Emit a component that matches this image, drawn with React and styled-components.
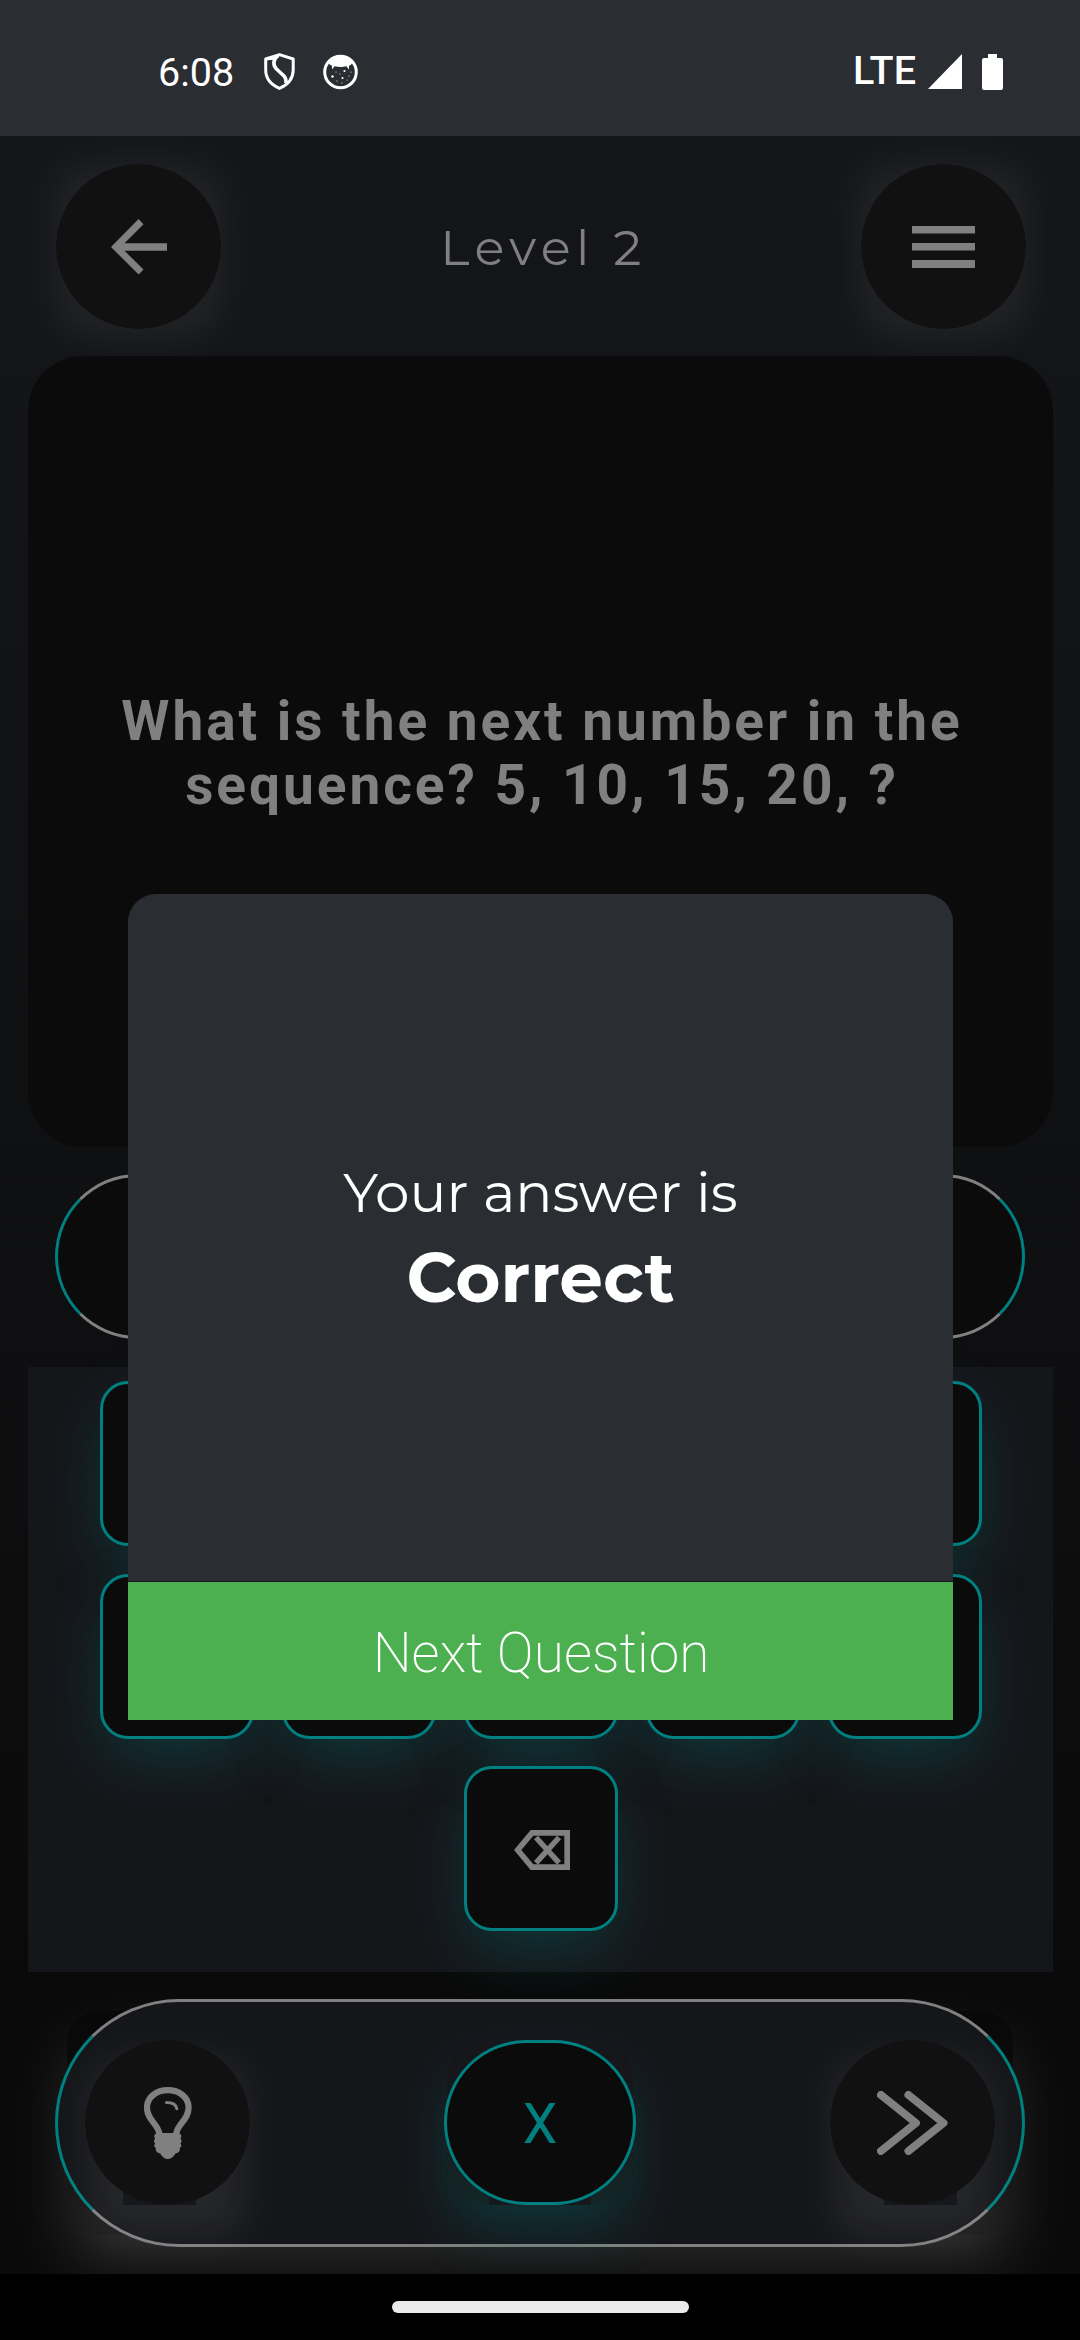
import React from "react";
import styled, { createGlobalStyle } from "styled-components";

const GlobalStyle = createGlobalStyle`
  *, *::before, *::after { box-sizing: border-box; }
  html, body { margin: 0; padding: 0; background: #000; }
`;

const teal = "#008080";
const muted = "#808080";
const surface = "#15161a";
const panel = "#2a2d32";
const ink = "#0b0b0b";

const Screen = styled.div`
  position: relative;
  display: flex;
  flex-direction: column;
  width: 1080px;
  height: 2340px;
  overflow: hidden;
  font-family: Roboto, "Liberation Sans", sans-serif;
`;

const StatusBar = styled.header`
  display: flex;
  align-items: center;
  justify-content: space-between;
  flex: none;
  height: 136px;
  padding: 7px 77px 0 158px;
  background: ${panel};
  color: #fff;
`;

const StatusGroup = styled.div`
  display: flex;
  align-items: center;
`;

const Clock = styled.span`
  font-size: 39.5px;
  line-height: 46px;
  margin: 2px 30px 0 0;
`;

const Network = styled.span`
  font-size: 39.5px;
  line-height: 46px;
  font-weight: 500;
  margin: -2px 12px 0 0;
`;

const Icon = styled.svg`
  display: block;
  flex: none;
  margin: ${(p) => p.$margin || 0};
`;

const Game = styled.main`
  display: flex;
  flex-direction: column;
  align-items: center;
  flex: none;
  height: 2138px;
  padding-left: 1px;
  overflow: hidden;
  background: linear-gradient(#151619 0%, #101113 42%, #0a0a0a 86%);
`;

const TopBar = styled.div`
  display: flex;
  align-items: center;
  justify-content: space-between;
  width: 970px;
  height: 165px;
  margin: 28px 0 0 1px;
`;

const RoundButton = styled.button`
  position: relative;
  isolation: isolate;
  display: flex;
  align-items: center;
  justify-content: center;
  width: 165px;
  height: 165px;
  padding: 0;
  border: 0;
  background: none;

  &::before {
    content: "";
    position: absolute;
    z-index: -2;
    inset: ${(p) => (p.$low ? "22px 6px -32px" : "4px 1px -6px")};
    border-radius: 28px;
    background: rgba(255, 255, 255, ${(p) => (p.$low ? 0.075 : 0.065)});
    filter: blur(${(p) => (p.$low ? 20 : 21)}px);
  }

  &::after {
    content: "";
    position: absolute;
    z-index: -1;
    inset: 0;
    background:
      radial-gradient(circle closest-side, #111 99.4%, transparent 100%),
      ${(p) =>
        p.$low
          ? `linear-gradient(#16181d, #16181d) ${p.$low} 100% / 73px 14px no-repeat`
          : "none"};
  }
`;

const Title = styled.h1`
  margin: 1px 0 0 5px;
  font: 400 49.5px/60px Montserrat, Lato, sans-serif;
  letter-spacing: 5.4px;
  color: ${muted};
  white-space: nowrap;
`;

const QuestionCard = styled.section`
  position: relative;
  display: flex;
  align-items: center;
  justify-content: center;
  flex: none;
  width: 1025px;
  height: 791px;
  margin-top: 27px;
  border-radius: 55px;
  background: ${ink};
`;

const Question = styled.p`
  width: 890px;
  margin: 3px 0 0 3px;
  font-size: 55px;
  font-weight: 700;
  line-height: 64px;
  letter-spacing: 2.96px;
  text-align: center;
  color: ${muted};
`;

const AnswerField = styled.div`
  flex: none;
  width: 970px;
  height: 165px;
  margin: 27px 1px 0 0;
  border: 3px solid;
  border-color: ${muted} ${teal};
  border-radius: 83px;
  background: ${ink};
`;

const Keypad = styled.section`
  display: flex;
  flex-wrap: wrap;
  align-content: flex-start;
  justify-content: center;
  gap: 27.5px 28px;
  flex: none;
  width: 1025px;
  height: 605px;
  margin-top: 28px;
  padding: 14px 70px 0 71px;
  background: ${surface};
`;

const Key = styled.button`
  display: flex;
  align-items: center;
  justify-content: center;
  width: 154px;
  height: 165px;
  padding: 3px 0 0 2px;
  border: 3px solid ${teal};
  border-radius: 28px;
  background: ${ink};
  box-shadow: 0 24px 62px -6px rgba(0, 128, 128, 0.31);
`;

const ActionBar = styled.nav`
  position: relative;
  isolation: isolate;
  display: flex;
  align-items: center;
  justify-content: space-between;
  flex: none;
  width: 970px;
  height: 248px;
  margin: 27px 1px 0 0;
  padding: 0 30px 1px;

  &::before {
    content: "";
    position: absolute;
    z-index: -3;
    inset: 12px;
    border-radius: 32px;
    background: linear-gradient(#080808, #0d0d0d 45%, #1c1c1c);
    box-shadow: 0 32px 62px rgba(255, 255, 255, 0.125);
  }

  &::after {
    content: "";
    position: absolute;
    z-index: -2;
    inset: 0;
    border: 3px solid;
    border-color: ${muted} ${teal};
    border-radius: 124px;
    background: ${surface};
  }
`;

const SubmitButton = styled.button`
  position: relative;
  width: 192px;
  height: 165px;
  padding: 3px 0 0;
  border: 3px solid ${teal};
  border-radius: 83px;
  background: ${ink};
  color: ${teal};
  font: 400 55px/60px Roboto, sans-serif;

  &::before {
    content: "";
    position: absolute;
    z-index: -1;
    inset: -1px 0 -3px;
    border-radius: 38px;
    background:
      linear-gradient(#15191c, #15191c) 50% 100% / 102px 14px no-repeat,
      linear-gradient(#15171a 20%, #132628);
    box-shadow: 0 26px 56px -5px rgba(0, 128, 128, 0.31);
  }
`;

const SystemNav = styled.footer`
  display: flex;
  align-items: center;
  justify-content: center;
  flex: 1;
  background: #000;
`;

const HomeHandle = styled.div`
  width: 297px;
  height: 12px;
  border-radius: 6px;
  background: #ebebeb;
`;

const Overlay = styled.div`
  position: absolute;
  inset: 0;
  display: flex;
  align-items: flex-start;
  justify-content: center;
  padding: 894px 0 0 1px;
`;

const Dialog = styled.div`
  display: flex;
  flex-direction: column;
  width: 825px;
  height: 826px;
  overflow: hidden;
  border-radius: 28px 28px 0 0;
  background: ${panel};
`;

const DialogBody = styled.div`
  display: flex;
  flex-direction: column;
  align-items: center;
  justify-content: center;
  flex: 1;
  padding-top: 3px;
  border-bottom: 1px solid #17191c;
  color: #fff;
  font-family: Montserrat, Lato, sans-serif;
  white-space: nowrap;
`;

const ResultLead = styled.p`
  margin: 0;
  font-size: 55px;
  line-height: 68px;
`;

const Result = styled.strong`
  font-size: 69.2px;
  font-weight: 700;
  line-height: 84px;
  margin-top: 8px;
`;

const NextButton = styled.button`
  height: 138px;
  padding: 4px 0 0 1px;
  border: 0;
  background: #4caf50;
  color: #fff;
  font: 200 55px/64px Roboto, sans-serif;
`;

const ShieldIcon = () => (
  <Icon width="31" height="37" viewBox="0 0 31 37" fill="none" stroke="#fff" strokeWidth="3" strokeLinejoin="round">
    <path d="M15.5 1.600 29.200 6V17c0 9-6 15-13.700 18.400C7.700 32 1.700 26 1.700 17V6Z" />
    <path d="M14.500 2.500C9 5.500 8.500 12 12.500 16l7.500 7c1.800 1.800 2.200 4 1.800 7" strokeWidth="3.600" />
    <path d="M3 6.300 11 4.500v3.500" strokeWidth="2.500" />
  </Icon>
);

const CatIcon = () => (
  <Icon width="35" height="36" viewBox="0 0 35 36" $margin="0 0 0 28px">
    <circle cx="17.500" cy="18" r="15.800" fill="none" stroke="#fff" strokeWidth="3" />
    <path d="M5 8C9-1 26-1 30 8c-1 2-2.500 3.200-4 3.800L26 15.500l-2.600-3.200c-4 .8-7.800.8-11.800 0L9 15.500l0-3.700C7.500 11.200 6 10 5 8Z" fill="#fff" />
    <g fill="#fff">
      <circle cx="9.500" cy="22.500" r="1.200" />
      <circle cx="21.500" cy="17" r="1.100" />
      <circle cx="19.500" cy="24" r="1.100" />
      <circle cx="13" cy="18" r=".5" />
      <circle cx="14" cy="27" r=".6" />
      <circle cx="26" cy="22" r=".6" />
      <circle cx="17" cy="20" r=".5" />
      <circle cx="19" cy="29" r=".6" />
      <circle cx="24" cy="26" r=".5" />
      <circle cx="28" cy="18" r=".6" />
    </g>
  </Icon>
);

const SignalIcon = () => (
  <Icon width="34" height="35" viewBox="0 0 34 35">
    <path d="M34 0v35H0Z" fill="#fff" />
  </Icon>
);

const BatteryIcon = () => (
  <Icon width="21" height="36" viewBox="0 0 21 36" $margin="0 0 0 20px">
    <path d="M6 0h9v4h4a2 2 0 0 1 2 2v28a2 2 0 0 1-2 2H2a2 2 0 0 1-2-2V6a2 2 0 0 1 2-2h4Z" fill="#fff" />
  </Icon>
);

const BackIcon = () => (
  <Icon width="56" height="56" viewBox="0 0 56 56">
    <path d="M56 24.200v7.500H13.500l19 18.900-4.900 5L0 28 27.600 0l4.900 5.300-19 18.900Z" fill={muted} />
  </Icon>
);

const MenuIcon = () => (
  <Icon width="63" height="42" viewBox="0 0 63 42">
    <path d="M0 0h63v7.500H0zM0 17h63v7.500H0zM0 34h63v8H0z" fill={muted} />
  </Icon>
);

const BackspaceIcon = () => (
  <Icon width="56" height="40" viewBox="0 0 56 40" fill="none" stroke={muted}>
    <path d="M18 2.900H53.200V37.100H18L3.700 20Z" strokeWidth="5.700" />
    <path d="M22 7.500 45 32.800M45 7.500 22 32.800" strokeWidth="5.500" />
  </Icon>
);

const BulbIcon = () => (
  <Icon width="48" height="72" viewBox="0 0 48 72" fill="none" stroke={muted}>
    <path
      d="M15.700 48C14.500 36.500 3 33.500 3 20.500 3 10.200 12.500 3.200 23.800 3.200S44.600 10.200 44.600 20.500C44.600 33.500 33 36.500 31.900 48"
      strokeWidth="6.200"
    />
    <path d="M22.500 15.500c5.800 0 9.700 2.300 10.300 6.200" strokeWidth="3" strokeLinecap="round" />
    <path
      d="M13 46h21.600c3 1 3.400 4 1.800 5.500 1.600 1.600 1.600 3.600 0 5 1.400 1.500 1.400 3.500-.6 4.500.5 3-1 5-4.300 5.500C29.500 70 27 72 23.800 72s-5.700-2-7.700-5.500c-3.300-.5-4.800-2.500-4.300-5.500-2-1-2-3-.6-4.500-1.600-1.400-1.600-3.400 0-5C9.600 50 10 47 13 46Z"
      fill={muted}
      stroke="none"
    />
  </Icon>
);

const SkipIcon = () => (
  <Icon width="71" height="64" viewBox="0 0 71 64" fill="none" stroke={muted} strokeWidth="8" strokeLinecap="round" strokeLinejoin="round">
    <path d="M4 4 39 32 4 60M31.500 4 66.500 32 31.500 60" />
  </Icon>
);

const digits = [1, 2, 3, 4, 5, 6, 7, 8, 9, 0];

export default function App() {
  return (
    <Screen>
      <GlobalStyle />
      <StatusBar>
        <StatusGroup>
          <Clock>6:08</Clock>
          <ShieldIcon />
          <CatIcon />
        </StatusGroup>
        <StatusGroup>
          <Network>LTE</Network>
          <SignalIcon />
          <BatteryIcon />
        </StatusGroup>
      </StatusBar>

      <Game>
        <TopBar>
          <RoundButton>
            <BackIcon />
          </RoundButton>
          <Title>Level 2</Title>
          <RoundButton>
            <MenuIcon />
          </RoundButton>
        </TopBar>

        <QuestionCard>
          <Question>What is the next number in the sequence? 5, 10, 15, 20, ?</Question>
        </QuestionCard>

        <AnswerField />

        <Keypad>
          {digits.map((d) => (
            <Key key={d} />
          ))}
          <Key>
            <BackspaceIcon />
          </Key>
        </Keypad>

        <ActionBar>
          <RoundButton $low="38px">
            <BulbIcon />
          </RoundButton>
          <SubmitButton>X</SubmitButton>
          <RoundButton $low="54px">
            <SkipIcon />
          </RoundButton>
        </ActionBar>
      </Game>

      <SystemNav>
        <HomeHandle />
      </SystemNav>

      <Overlay>
        <Dialog>
          <DialogBody>
            <ResultLead>Your answer is</ResultLead>
            <Result>Correct</Result>
          </DialogBody>
          <NextButton>Next Question</NextButton>
        </Dialog>
      </Overlay>
    </Screen>
  );
}
